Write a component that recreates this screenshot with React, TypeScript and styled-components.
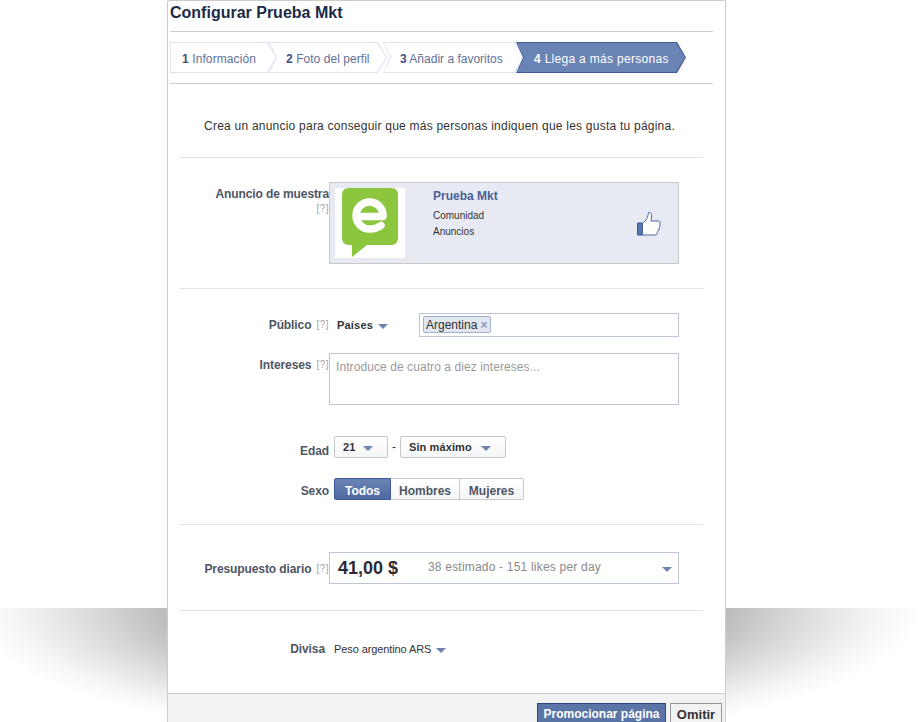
import React from "react";
import styled, { createGlobalStyle } from "styled-components";

const steps = [
  { num: "1", title: "Información", width: 107, pad: 12, shift: 0, spacing: 0.1 },
  { num: "2", title: "Foto del perfil", width: 118, pad: 17, shift: -8, spacing: 0.05 },
  { num: "3", title: "Añadir a favoritos", width: 141, pad: 17, shift: -4, spacing: 0 },
  { num: "4", title: "Llega a más personas", width: 170, pad: 18, shift: -8, spacing: 0.3, active: true },
];

const GlobalStyle = createGlobalStyle`
  html, body {
    margin: 0;
    padding: 0;
    background: #fff;
  }
  body {
    font-family: "Liberation Sans", Arial, sans-serif;
    font-size: 12px;
    color: #333;
  }
`;

const Page = styled.div`
  position: relative;
  width: 921px;
  height: 722px;
  overflow: hidden;
`;

const Shadow = styled.div`
  position: absolute;
  left: 0;
  right: 0;
  top: 607px;
  height: 115px;
  border-top: 1px solid rgba(255, 255, 255, 0.4);
  background: radial-gradient(
    ellipse 476px 135px at 446px 0,
    #a0a0a0 0%,
    #bcbcbc 59%,
    #d8d8d8 73%,
    #ebebeb 84%,
    #f7f7f7 92%,
    #ffffff 100%
  );
`;

const Dialog = styled.div`
  position: relative;
  box-sizing: border-box;
  width: 559px;
  height: 722px;
  margin-left: 167px;
  background: #fff;
  border: 1px solid #ccc;
  border-bottom: 0;
  border-radius: 2px 2px 0 0;
  display: flex;
  flex-direction: column;
`;

const Header = styled.div`
  margin: 0 12px 0 2px;
`;

const Title = styled.h1`
  margin: 0;
  height: 30px;
  border-bottom: 1px solid #ccc;
  font-size: 16px;
  line-height: 24px;
  font-weight: bold;
  color: #1c2a47;
`;

const StepBar = styled.div`
  display: flex;
  height: 31px;
  margin-top: 10px;
  padding-bottom: 10px;
  border-bottom: 1px solid #ccc;
`;

const Step = styled.div<{ $width: number; $pad: number; $shift: number; $spacing: number; $active?: boolean; $first: boolean }>`
  position: relative;
  box-sizing: border-box;
  width: ${(p) => p.$width}px;
  margin-left: ${(p) => p.$shift}px;
  padding-left: ${(p) => p.$pad}px;
  line-height: 34px;
  white-space: nowrap;
  letter-spacing: ${(p) => p.$spacing}px;
  color: ${(p) => (p.$active ? "#fff" : "#62719a")};
  background: ${(p) => (p.$active ? "#3f5c9a" : "#dfe3ee")};
  clip-path: polygon(
    0 0,
    calc(100% - 9px) 0,
    100% 50%,
    calc(100% - 9px) 100%,
    0 100%,
    ${(p) => (p.$first ? "0" : "7px")} 50%
  );

  &::before {
    content: "";
    position: absolute;
    inset: 1px;
    background: ${(p) => (p.$active ? "#6a84b5" : "#fff")};
    clip-path: polygon(
      0 0,
      calc(100% - 9px) 0,
      100% 50%,
      calc(100% - 9px) 100%,
      0 100%,
      ${(p) => (p.$first ? "0" : "7px")} 50%
    );
  }

  span {
    position: relative;
  }

  b {
    color: ${(p) => (p.$active ? "#fff" : "#3f4f7a")};
  }
`;

const Section = styled.div<{ $top: number; $bottom: number; $last?: boolean }>`
  margin: 0 22px 0 12px;
  padding: ${(p) => p.$top}px 0 ${(p) => p.$bottom}px;
  border-bottom: ${(p) => (p.$last ? "0" : "1px solid #e3e3e3")};
`;

const Intro = styled.p`
  margin: 0 4px 0 0;
  text-align: center;
  line-height: 16px;
  letter-spacing: 0.23px;
  color: #333;
`;

const Row = styled.div<{ $gap?: number }>`
  display: grid;
  grid-template-columns: 149px 350px;
  margin-top: ${(p) => p.$gap || 0}px;
`;

// the negative bottom margin keeps a label from making its row taller than the control
const Label = styled.div<{ $down?: number; $right?: number }>`
  text-align: right;
  font-weight: bold;
  line-height: 24px;
  letter-spacing: -0.1px;
  color: #4e5665;
  margin-bottom: -12px;
  padding-top: ${(p) => p.$down || 0}px;
  padding-right: ${(p) => p.$right || 0}px;
  white-space: nowrap;
`;

const Help = styled.span<{ $block?: boolean }>`
  display: ${(p) => (p.$block ? "block" : "inline")};
  margin-left: 5px;
  margin-top: ${(p) => (p.$block ? "-3px" : "0")};
  font-size: 10px;
  line-height: ${(p) => (p.$block ? "14px" : "inherit")};
  font-weight: normal;
  letter-spacing: 0.5px;
  color: #a5a5a5;
  position: relative;
  top: -1px;
`;

const AdPreview = styled.div`
  box-sizing: border-box;
  height: 82px;
  padding: 5px 17px 5px 5px;
  display: flex;
  background: #e7eaf2;
  border: 1px solid #c9c9c9;
`;

const LogoBox = styled.div`
  width: 70px;
  height: 70px;
  background: #fff;
  flex: none;
`;

const AdText = styled.div`
  flex: 1;
  margin-left: 28px;
  font-size: 10px;
  color: #333;
  line-height: 16px;
`;

const AdName = styled.div`
  font-size: 12px;
  font-weight: bold;
  color: #4a5f95;
  line-height: 16px;
  margin-bottom: 4px;
`;

const ThumbWrap = styled.div`
  align-self: center;
  width: 25px;
  height: 25px;
`;

const Field = styled.div`
  display: flex;
  align-items: center;
  min-height: 24px;
`;

const PlainSelect = styled.div`
  display: inline-flex;
  align-items: center;
  margin-left: 8px;
  font-size: 11px;
  font-weight: bold;
  color: #333;
  letter-spacing: 0.2px;
`;

const PlainSelectThin = styled(PlainSelect)`
  font-weight: normal;
  letter-spacing: -0.1px;
  margin-left: 5px;
`;

const Arrow = styled.i<{ $left: number }>`
  display: inline-block;
  width: 0;
  height: 0;
  margin-left: ${(p) => p.$left}px;
  margin-top: 2px;
  border-style: solid;
  border-width: 5px 5px 0;
  border-color: #6f83b0 transparent transparent;
`;

const TokenInput = styled.div`
  box-sizing: border-box;
  width: 260px;
  height: 24px;
  margin-left: auto;
  padding: 2px 3px;
  border: 1px solid #bdc7d8;
  display: flex;
  align-items: flex-start;
`;

const Token = styled.span`
  box-sizing: border-box;
  height: 17px;
  padding: 0 3px 0 2px;
  line-height: 16px;
  background: #e2e6f0;
  border: 1px solid #a3b0cd;
  border-radius: 2px;
  color: #333;
  white-space: nowrap;
`;

const TokenClose = styled.b`
  margin-left: 3px;
  color: #8a9ab9;
`;

const TextArea = styled.div`
  box-sizing: border-box;
  width: 350px;
  height: 52px;
  padding: 5px 6px;
  line-height: 16px;
  letter-spacing: 0.08px;
  border: 1px solid #bdc7d8;
  color: #9a9a9a;
`;

const ControlRow = styled.div`
  display: flex;
  align-items: center;
  padding-left: 5px;
`;

const DropButton = styled.div<{ $width: number; $pad: number }>`
  box-sizing: border-box;
  width: ${(p) => p.$width}px;
  height: 22px;
  padding-left: ${(p) => p.$pad}px;
  display: flex;
  align-items: center;
  font-size: 11px;
  font-weight: bold;
  color: #333;
  letter-spacing: 0.1px;
  background: linear-gradient(#fff, #f5f6f7);
  border: 1px solid #c6c7ca;
  border-radius: 2px;
`;

const Dash = styled.span`
  width: 12px;
  text-align: center;
`;

const SegButton = styled.div<{ $width: number; $active?: boolean }>`
  box-sizing: border-box;
  width: ${(p) => p.$width}px;
  height: 22px;
  line-height: 24px;
  text-align: center;
  font-weight: bold;
  color: ${(p) => (p.$active ? "#fff" : "#4e5665")};
  background: ${(p) => (p.$active ? "linear-gradient(#6b84b4, #4f6aa3)" : "linear-gradient(#fff, #f5f6f7)")};
  border: 1px solid ${(p) => (p.$active ? "#3b5998" : "#c6c7ca")};
  border-left-width: ${(p) => (p.$active ? "1px" : "0")};
  border-radius: ${(p) => (p.$active ? "2px 0 0 2px" : "0")};

  &:last-child {
    border-radius: 0 2px 2px 0;
  }
`;

const BudgetBox = styled.div`
  box-sizing: border-box;
  width: 350px;
  height: 32px;
  padding: 0 6px 0 8px;
  display: flex;
  align-items: center;
  border: 1px solid #bdc7d8;
`;

const Amount = styled.b`
  font-size: 18px;
  color: #2b2b35;
  width: 90px;
  flex: none;
`;

const Estimate = styled.span`
  flex: 1;
  color: #8a8a8a;
  letter-spacing: 0.2px;
  position: relative;
  top: -1px;
`;

const Footer = styled.div`
  flex: 1;
  display: flex;
  justify-content: flex-end;
  align-items: flex-start;
  gap: 4px;
  padding: 9px 3px 0 0;
  background: #f2f2f2;
  border-top: 1px solid #ccc;
`;

const PrimaryButton = styled.div`
  box-sizing: border-box;
  width: 129px;
  height: 24px;
  line-height: 21px;
  text-align: center;
  font-weight: bold;
  color: #fff;
  background: #5b74a8;
  border: 1px solid #29447e;
`;

const SkipButton = styled.div`
  box-sizing: border-box;
  width: 52px;
  height: 24px;
  line-height: 22px;
  text-align: center;
  font-size: 13px;
  font-weight: bold;
  color: #333;
  background: #f2f2f2;
  border: 1px solid #999;
`;

const Logo = () => (
  <svg width="70" height="70" viewBox="0 0 70 70">
    <path
      d="M14 0H56Q63 0 63 7V50Q63 57 56 57H32L17 69V57H14Q7 57 7 50V7Q7 0 14 0Z"
      fill="#8cc63f"
    />
    <path
      d="M22 28.5H48A13.5 13.5 0 1 0 35 41Q41 41 46 37.5"
      fill="none"
      stroke="#fff"
      strokeWidth="7.5"
      strokeLinecap="round"
      strokeLinejoin="round"
    />
  </svg>
);

const Thumb = () => (
  <svg width="25" height="25" viewBox="0 0 25 25">
    <path d="M1.5 12H6.5V24H1.5Z" fill="#5a74ac" stroke="#3b5998" />
    <path
      d="M6.5 12C10 10.5 12 6 12.5 1.5C15 1 16 3 15.5 6C15.3 7.5 15 9 15 10H22.5C24 10 24.5 11.5 23.8 13C24.3 14.5 24 16 23 17C23.2 18.5 22.8 20 21.5 20.5C21.5 22.5 20.5 24 19 24H6.5Z"
      fill="#fff"
      stroke="#4a66a0"
    />
  </svg>
);

const App = () => {
  return (
    <Page>
      <GlobalStyle />
      <Shadow />
      <Dialog>
        <Header>
          <Title>Configurar Prueba Mkt</Title>
          <StepBar>
            {steps.map((s, i) => (
              <Step
                key={s.num}
                $width={s.width}
                $pad={s.pad}
                $shift={s.shift}
                $spacing={s.spacing}
                $active={s.active}
                $first={i === 0}
              >
                <span>
                  <b>{s.num}</b> {s.title}
                </span>
              </Step>
            ))}
          </StepBar>
        </Header>

        <Section $top={34} $bottom={23}>
          <Intro>Crea un anuncio para conseguir que más personas indiquen que les gusta tu página.</Intro>
        </Section>

        <Section $top={24} $bottom={24}>
          <Row>
            <Label>
              Anuncio de muestra
              <Help $block>[?]</Help>
            </Label>
            <AdPreview>
              <LogoBox>
                <Logo />
              </LogoBox>
              <AdText>
                <AdName>Prueba Mkt</AdName>
                <div>Comunidad</div>
                <div>Anuncios</div>
              </AdText>
              <ThumbWrap>
                <Thumb />
              </ThumbWrap>
            </AdPreview>
          </Row>
        </Section>

        <Section $top={24} $bottom={24}>
          <Row>
            <Label>
              Público<Help>[?]</Help>
            </Label>
            <Field>
              <PlainSelect>
                Países<Arrow $left={5} />
              </PlainSelect>
              <TokenInput>
                <Token>
                  Argentina<TokenClose>×</TokenClose>
                </Token>
              </TokenInput>
            </Field>
          </Row>
          <Row $gap={16}>
            <Label>
              Intereses<Help>[?]</Help>
            </Label>
            <TextArea>Introduce de cuatro a diez intereses...</TextArea>
          </Row>
          <Row $gap={31}>
            <Label $down={3}>Edad</Label>
            <ControlRow>
              <DropButton $width={54} $pad={8}>
                21<Arrow $left={8} />
              </DropButton>
              <Dash>-</Dash>
              <DropButton $width={106} $pad={8}>
                Sin máximo<Arrow $left={9} />
              </DropButton>
            </ControlRow>
          </Row>
          <Row $gap={20}>
            <Label $down={1}>Sexo</Label>
            <ControlRow>
              <SegButton $width={57} $active>
                Todos
              </SegButton>
              <SegButton $width={69}>Hombres</SegButton>
              <SegButton $width={64}>Mujeres</SegButton>
            </ControlRow>
          </Row>
        </Section>

        <Section $top={27} $bottom={26}>
          <Row>
            <Label $down={5}>
              Presupuesto diario<Help>[?]</Help>
            </Label>
            <BudgetBox>
              <Amount>41,00 $</Amount>
              <Estimate>38 estimado - 151 likes per day</Estimate>
              <Arrow $left={0} />
            </BudgetBox>
          </Row>
        </Section>

        <Section $top={26} $bottom={32} $last>
          <Row>
            <Label $right={4}>Divisa</Label>
            <Field>
              <PlainSelectThin>
                Peso argentino ARS<Arrow $left={5} />
              </PlainSelectThin>
            </Field>
          </Row>
        </Section>

        <Footer>
          <PrimaryButton>Promocionar página</PrimaryButton>
          <SkipButton>Omitir</SkipButton>
        </Footer>
      </Dialog>
    </Page>
  );
};

export default App;
